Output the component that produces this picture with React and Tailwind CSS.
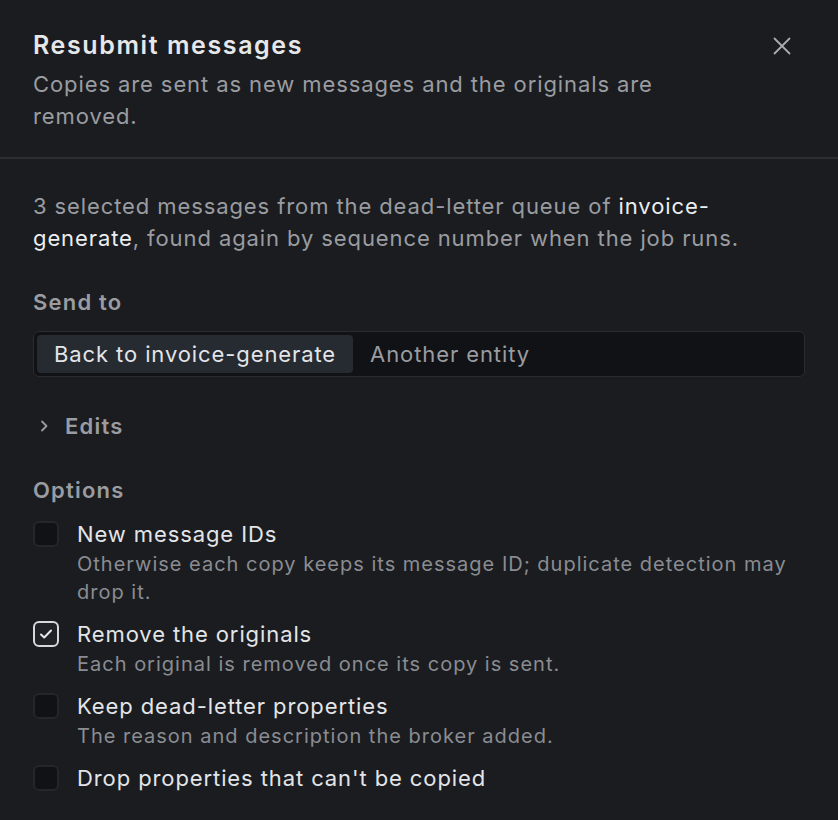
import React, { useState } from 'react';

const options = [
  {
    id: 'new-ids',
    label: 'New message IDs',
    hint: 'Otherwise each copy keeps its message ID; duplicate detection may drop it.',
    checked: false,
  },
  {
    id: 'remove',
    label: 'Remove the originals',
    hint: 'Each original is removed once its copy is sent.',
    checked: true,
  },
  {
    id: 'keep-dl',
    label: 'Keep dead-letter properties',
    hint: 'The reason and description the broker added.',
    checked: false,
  },
  {
    id: 'drop-props',
    label: "Drop properties that can't be copied",
    checked: false,
  },
];

const Check = ({ checked, onChange }) => (
  <button
    type="button"
    onClick={onChange}
    className={`mt-[3px] w-[26px] h-[26px] shrink-0 rounded-[6px] border-2 flex items-center justify-center ${
      checked ? 'border-[#d6d8dc] bg-[#1f2227]' : 'border-[#24262b] bg-[#111215]'
    }`}
  >
    {checked && (
      <svg width="16" height="16" viewBox="0 0 16 16" fill="none">
        <path d="M3 8.5l3.2 3L13 4.5" stroke="#e8e9eb" strokeWidth="2" strokeLinecap="round" strokeLinejoin="round" />
      </svg>
    )}
  </button>
);

export default function App() {
  const [target, setTarget] = useState('back');
  const [checks, setChecks] = useState(options.map((o) => o.checked));

  return (
    <div
      className="min-h-screen w-[838px] bg-[#1a1c20] text-[22px] tracking-[0.9px] text-[#9a9ca1]"
      style={{ fontFamily: 'Inter, "Noto Sans", sans-serif' }}
    >
      <div className="flex items-start justify-between pl-[33px] pr-[46px] pt-[28px] pb-[25px] border-b-2 border-[#2c2e33]">
        <div>
          <h1 className="text-[25px] tracking-[1.6px] leading-[34px] font-semibold text-[#e6e7e9]">
            Resubmit messages
          </h1>
          <p className="mt-[6px] leading-[32px] max-w-[660px]">
            Copies are sent as new messages and the originals are removed.
          </p>
        </div>
        <button type="button" className="mt-[8px] text-[#a9abb0]">
          <svg width="20" height="20" viewBox="0 0 20 20" fill="none">
            <path d="M2.5 2.5l15 15M17.5 2.5l-15 15" stroke="currentColor" strokeWidth="1.8" strokeLinecap="round" />
          </svg>
        </button>
      </div>

      <div className="px-[33px] pt-[31px]">
        <p className="leading-[32px]">
          3 selected messages from the dead-letter queue of{' '}
          <span className="text-[#eceef0]">invoice-generate</span>, found again by sequence number when the
          job runs.
        </p>

        <h2 className="mt-[32px] font-semibold tracking-[1.2px] leading-[32px]">Send to</h2>
        <div className="mt-[13px] flex h-[46px] p-[3px] rounded-[6px] border border-[#2a2c31] bg-[#111215]">
          <button
            type="button"
            onClick={() => setTarget('back')}
            className={`px-[17px] rounded-[4px] ${target === 'back' ? 'bg-[#262a31] text-[#e3e5e8]' : 'text-[#9a9ca1]'}`}
          >
            Back to invoice-generate
          </button>
          <button
            type="button"
            onClick={() => setTarget('other')}
            className={`px-[17px] rounded-[4px] ${target === 'other' ? 'bg-[#262a31] text-[#e3e5e8]' : 'text-[#9a9ca1]'}`}
          >
            Another entity
          </button>
        </div>

        <div className="mt-[33px] flex items-center gap-[12px]">
          <svg width="18" height="18" viewBox="0 0 18 18" fill="none" className="ml-[2px]">
            <path d="M7 4.5L11.5 9L7 13.5" stroke="currentColor" strokeWidth="1.8" strokeLinecap="round" strokeLinejoin="round" />
          </svg>
          <span className="font-semibold tracking-[1.2px] leading-[32px]">Edits</span>
        </div>

        <h2 className="mt-[32px] font-semibold tracking-[1.2px] leading-[32px]">Options</h2>
        <div className="mt-[12px] flex flex-col gap-[12px]">
          {options.map((o, i) => (
            <label key={o.id} className="flex gap-[18px]">
              <Check
                checked={checks[i]}
                onChange={() => setChecks((c) => c.map((v, j) => (j === i ? !v : v)))}
              />
              <div>
                <div className="leading-[32px] text-[#e3e5e8]">{o.label}</div>
                {o.hint && (
                  <div className="text-[20px] tracking-[1px] leading-[28px] text-[#8a8c91]">{o.hint}</div>
                )}
              </div>
            </label>
          ))}
        </div>
      </div>
    </div>
  );
}
